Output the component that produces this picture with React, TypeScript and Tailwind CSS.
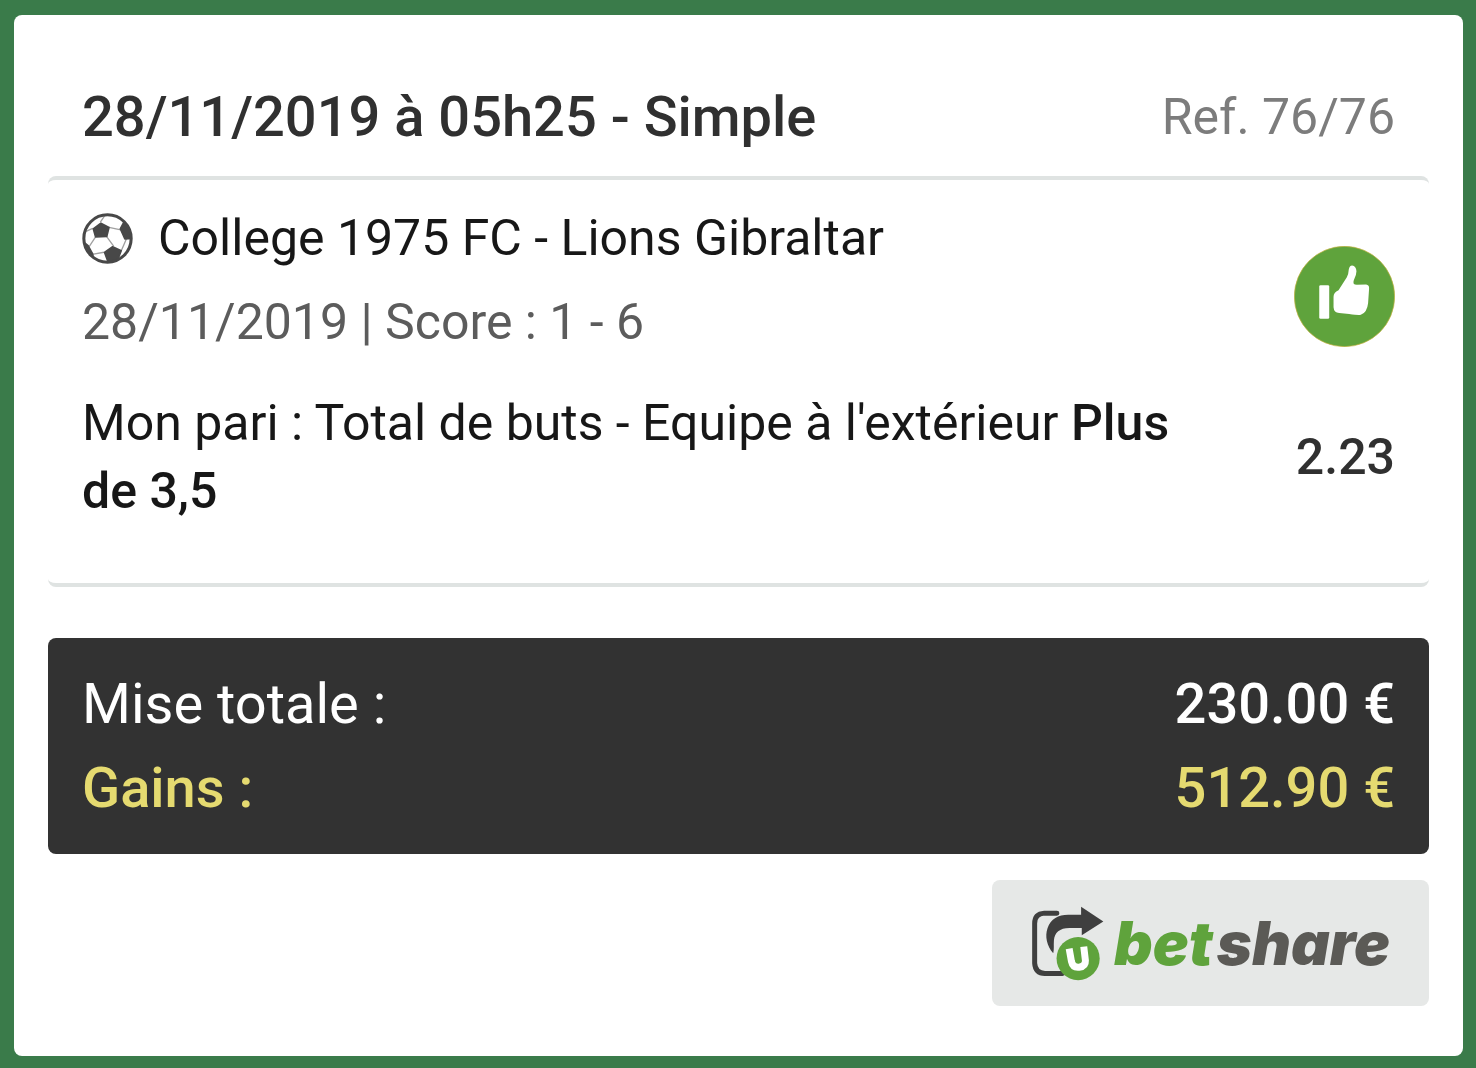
import React from "react";

function BallIcon() {
  return (
    <svg viewBox="0 0 50 50" className="h-[51px] w-[51px] shrink-0" aria-hidden="true">
      <defs>
        <clipPath id="ball">
          <circle cx="25" cy="25" r="24" />
        </clipPath>
      </defs>
      <circle cx="25" cy="25" r="23.5" fill="#fff" />
      <g clipPath="url(#ball)">
        <path
          d="M26.500 14 38 16.500M24 23l7 9.500M13 23.800 7 33M43.500 25.500 38.500 37M10 40.500l11.500-2M18 9l4-6M10.500 15 4 18"
          fill="none"
          stroke="#a0a0a0"
          strokeWidth="1.300"
        />
        <g fill="#484848" stroke="#484848" strokeWidth="1.500" strokeLinejoin="round">
          <path d="M11 15.500 18.500 10l8 4.200L24.300 23l-11 .6z" />
          <path d="M22 38.500 30 33l8.500 4-3.500 9-9.500 2z" />
          <path d="M37.500 15.500 41 9l4 2 5 14-8 .5z" />
          <path d="M0 27 6 32l4.500 8 1 8H0z" />
        </g>
      </g>
      <circle cx="25" cy="25" r="23.200" fill="none" stroke="#484848" strokeWidth="3" />
    </svg>
  );
}

function ThumbIcon() {
  return (
    <svg viewBox="44 34 304 304" className="h-[101px] w-[101px]" role="img" aria-label="Pari gagné">
      <circle cx="196" cy="186" r="151" fill="#5fa33c" stroke="#c9b23c" strokeWidth="2" />
      <rect x="120" y="152" width="30" height="101" rx="4" fill="#fff" />
      <path
        d="M163 187Q163 174 178 167L203 128Q208 120 209 104Q211 94 219 93Q231 95 232 110Q232 122 224 137Q219 151 233 151L261 150Q271 151 270 163L267 206Q264 234 245 241Q240 243 210 239L180 236Q164 234 163 218Z"
        fill="#fff"
      />
    </svg>
  );
}

function ShareIcon() {
  return (
    <svg viewBox="30 30 220 225" className="h-[75px] w-[73px] shrink-0" aria-hidden="true">
      <path d="M108 51H70Q41 53 41 82V202Q43 232 72 233H125" fill="none" stroke="#3f3f3f" strokeWidth="15" strokeLinecap="round" />
      <path d="M97 172C78 150 71 122 80 96C90 68 112 56 142 56H181V32L248 76L183 118V96H146C116 96 101 110 99 134C98 148 100 160 97 172Z" fill="#3f3f3f" />
      <circle cx="172" cy="188" r="65" fill="#5fa33c" />
      <path d="M145 158L152 197Q156 216 175 214Q195 211 194 194L189 152" fill="none" stroke="#fff" strokeWidth="21" />
    </svg>
  );
}

export default function App() {
  return (
    <main className="min-h-screen bg-[#3a7b4a] pt-[15px] pr-[13px] pb-3 pl-3.5 font-['Roboto',sans-serif]">
      <article className="flex min-h-[1041px] flex-col rounded-lg bg-white px-[34px] pt-16">
        <header className="flex items-center justify-between px-[34px] pb-[21px]">
          <h1 className="text-[56px] leading-[76px] font-medium text-[#303030]">28/11/2019 à 05h25 - Simple</h1>
          <span className="text-[50px] leading-[76px] text-[#7c7c7c]">Ref. 76/76</span>
        </header>

        <section className="flex justify-between rounded-lg border-y-4 border-[#dfe3e2] px-[34px] pt-6 pb-[58px]">
          <div className="max-w-[1120px]">
            <h2 className="flex items-center gap-[25px] text-[50px] leading-[68px] font-normal text-[#171717]">
              <BallIcon />
              College 1975 FC - Lions Gibraltar
            </h2>
            <p className="mt-4 text-[50px] leading-[68px] text-[#5c5c5c]">28/11/2019 | Score : 1 - 6</p>
            <p className="mt-[33px] text-[50px] leading-[68px] text-[#171717]">
              Mon pari : Total de buts - Equipe à l'extérieur <strong className="font-medium">Plus de 3,5</strong>
            </p>
          </div>
          <div className="flex flex-col items-end pt-[42px]">
            <ThumbIcon />
            <span className="mt-[76px] text-[50px] leading-[68px] font-medium text-[#303030]">2.23</span>
          </div>
        </section>

        <dl className="mt-[51px] rounded-lg bg-[#323232] px-[34px] py-6 text-[56px] leading-[84px]">
          <div className="flex justify-between text-white">
            <dt>Mise totale :</dt>
            <dd className="font-medium">230.00 €</dd>
          </div>
          <div className="flex justify-between font-medium text-[#e5da70]">
            <dt>Gains :</dt>
            <dd>512.90 €</dd>
          </div>
        </dl>

        <button
          type="button"
          className="mt-[26px] flex h-[126px] items-center gap-2.5 self-end rounded-lg bg-[#e6e8e7] px-[39px] font-['Inter',sans-serif] text-[60px] leading-none font-black italic"
        >
          <ShareIcon />
          <span className="flex gap-1">
            <span className="text-[#5fa33c]">bet</span>
            <span className="text-[#5b5a56]">share</span>
          </span>
        </button>
      </article>
    </main>
  );
}
